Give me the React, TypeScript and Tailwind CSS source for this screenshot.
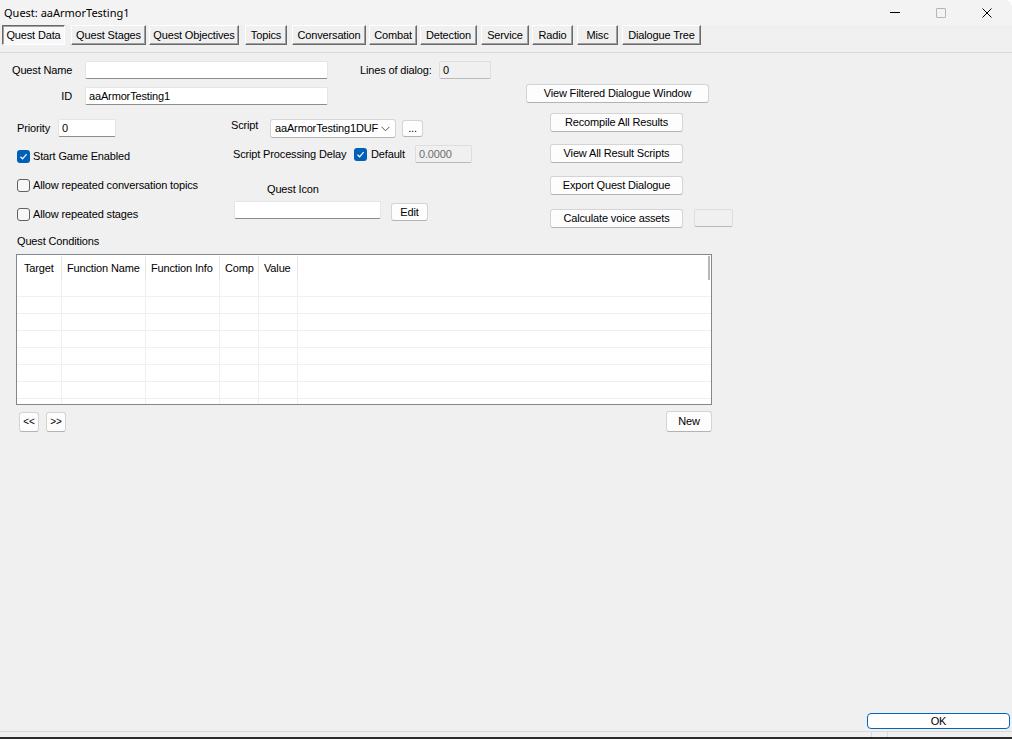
import React from 'react';

const tabs = [
  { label: 'Quest Data', cls: 'w-[63px] ml-[2px]', active: true },
  { label: 'Quest Stages', cls: 'w-[75px] ml-[6px]' },
  { label: 'Quest Objectives', cls: 'w-[90px] ml-[3px]' },
  { label: 'Topics', cls: 'w-[42px] ml-[6px]' },
  { label: 'Conversation', cls: 'w-[74px] ml-[5px]' },
  { label: 'Combat', cls: 'w-[48px] ml-[3px]' },
  { label: 'Detection', cls: 'w-[57px] ml-[3px]' },
  { label: 'Service', cls: 'w-[48px] ml-[4px]' },
  { label: 'Radio', cls: 'w-[41px] ml-[3px]' },
  { label: 'Misc', cls: 'w-[41px] ml-[4px]' },
  { label: 'Dialogue Tree', cls: 'w-[79px] ml-[4px]' },
];

const columns = [
  { label: 'Target', cls: 'w-[45px] pl-[7px]' },
  { label: 'Function Name', cls: 'w-[84px] pl-[5px]' },
  { label: 'Function Info', cls: 'w-[74px] pl-[5px]' },
  { label: 'Comp', cls: 'w-[39px] pl-[5px]' },
  { label: 'Value', cls: 'w-[39px] pl-[5px]' },
];

function Input({ value = '', cls = '' }: { value?: string; cls?: string }) {
  return (
    <div className={`h-[18px] bg-white border border-[#e5e5e5] border-b-[#8d8d8d] rounded-[2px] flex items-center px-[3px] ${cls}`}>
      {value}
    </div>
  );
}

function ReadOnly({ value = '', cls = '' }: { value?: string; cls?: string }) {
  return (
    <div className={`h-[18px] bg-[#f0f0f0] border border-[#dedede] border-b-[#b9b9b9] rounded-[2px] flex items-center px-[3px] ${cls}`}>
      {value}
    </div>
  );
}

function Button({ children, cls = '' }: { children: React.ReactNode; cls?: string }) {
  return (
    <div className={`bg-[#fdfdfd] border border-[#d4d4d4] border-b-[#b3b3b3] rounded-[3px] flex items-center justify-center text-black ${cls}`}>
      {children}
    </div>
  );
}

function Check({ checked, label }: { checked?: boolean; label?: string }) {
  return (
    <div className="flex items-center h-[13px]">
      {checked ? (
        <div className="w-[13px] h-[13px] rounded-[3px] bg-[#005fb8] flex items-center justify-center">
          <svg width="9" height="9" viewBox="0 0 9 9">
            <path d="M1.5 4.8 L3.6 6.8 L7.6 2.2" fill="none" stroke="white" strokeWidth="1.2" />
          </svg>
        </div>
      ) : (
        <div className="w-[13px] h-[13px] rounded-[3px] border border-[#616161] bg-[#f7f7f7]" />
      )}
      {label && <span className="ml-[3px]">{label}</span>}
    </div>
  );
}

export default function App() {
  return (
    <div className="w-[1012px] h-[739px] bg-white overflow-hidden">
      <div
        className="w-[1012px] h-[739px] bg-[#f0f0f0] rounded-tr-[8px] flex flex-col text-[11px] tracking-[-0.15px] text-black leading-none"
        style={{ fontFamily: '"Liberation Sans", Arial, sans-serif' }}
      >
        {/* title bar */}
        <div className="h-[25px] bg-[#f3f3f3] rounded-tr-[8px] flex items-center shrink-0">
          <span className="pl-[4px] text-[11px] tracking-normal" style={{ fontFamily: '"Noto Sans", "Open Sans", sans-serif' }}>
            Quest: aaArmorTesting1
          </span>
          <div className="ml-auto flex items-center h-full">
            <div className="w-[46px] h-full flex items-center justify-center">
              <div className="w-[10px] h-px bg-black" />
            </div>
            <div className="w-[46px] h-full flex items-center justify-center">
              <div className="w-[10px] h-[10px] border border-[#b4b4b4] rounded-[1px]" />
            </div>
            <div className="w-[46px] h-full flex items-center justify-center mr-[2px]">
              <svg width="10" height="10" viewBox="0 0 10 10">
                <path d="M0.5 0.5 L9.5 9.5 M9.5 0.5 L0.5 9.5" stroke="black" strokeWidth="1" />
              </svg>
            </div>
          </div>
        </div>

        {/* tab strip */}
        <div className="h-[28px] border-b border-[#d9d9d9] shrink-0 flex items-start">
          {tabs.map((t) => (
            <div
              key={t.label}
              className={`h-[20px] flex items-center justify-center ${t.cls} ${
                t.active
                  ? 'bg-[#f8f8f8] border border-t-[#696969] border-l-[#696969] border-r-white border-b-white shadow-[inset_1px_1px_0_#a0a0a0]'
                  : 'bg-[#f0f0f0] border border-t-white border-l-white border-r-[#696969] border-b-[#696969] shadow-[inset_-1px_-1px_0_#a0a0a0]'
              }`}
            >
              {t.label}
            </div>
          ))}
        </div>

        {/* upper form */}
        <div className="h-[176px] flex shrink-0">
          <div className="w-[510px] flex flex-col">
            <div className="mt-[8px] h-[18px] flex items-center">
              <span className="ml-[12px] w-[73px]">Quest Name</span>
              <Input cls="w-[243px]" />
              <span className="ml-[32px] w-[79px]">Lines of dialog:</span>
              <ReadOnly cls="w-[52px]" value="0" />
            </div>
            <div className="mt-[8px] h-[18px] flex items-center">
              <span className="w-[85px] text-right pr-[13px]">ID</span>
              <Input cls="w-[243px]" value="aaArmorTesting1" />
            </div>

            <div className="mt-[14px] flex">
              <div className="w-[231px] pl-[17px] flex flex-col">
                <div className="h-[18px] flex items-center">
                  <span className="w-[41px]">Priority</span>
                  <Input cls="w-[58px]" value="0" />
                </div>
                <div className="mt-[13px]">
                  <Check checked label="Start Game Enabled" />
                </div>
                <div className="mt-[16px]">
                  <Check label="Allow repeated conversation topics" />
                </div>
                <div className="mt-[16px]">
                  <Check label="Allow repeated stages" />
                </div>
              </div>

              <div className="flex flex-col">
                <div className="h-[19px] flex items-start">
                  <span className="w-[39px] mt-[1px]">Script</span>
                  <div className="w-[126px] h-[19px] bg-white border border-[#d4d4d4] border-b-[#b3b3b3] rounded-[3px] flex items-center pl-[4px] pr-[5px]">
                    <span className="flex-1">aaArmorTesting1DUF</span>
                    <svg width="9" height="6" viewBox="0 0 9 6">
                      <path d="M0.5 0.8 L4.5 4.8 L8.5 0.8" fill="none" stroke="#555" strokeWidth="1" />
                    </svg>
                  </div>
                  <Button cls="ml-[6px] mt-[1px] w-[21px] h-[17px]">...</Button>
                </div>
                <div className="mt-[7px] h-[18px] flex items-center">
                  <span className="w-[123px] pl-[2px]">Script Processing Delay</span>
                  <Check checked />
                  <span className="ml-[4px] w-[44px]">Default</span>
                  <ReadOnly cls="w-[57px] text-[#6d6d6d]" value="0.0000" />
                </div>
                <div className="mt-[19px] h-[14px] flex items-center ml-[36px]">Quest Icon</div>
                <div className="mt-[5px] flex items-start">
                  <Input cls="ml-[3px] w-[147px]" />
                  <Button cls="ml-[10px] mt-[2px] w-[37px] h-[18px]">Edit</Button>
                </div>
              </div>
            </div>
          </div>

          <div className="ml-[16px] flex flex-col items-start">
            <Button cls="mt-[31px] w-[183px] h-[19px]">View Filtered Dialogue Window</Button>
            <Button cls="mt-[10px] ml-[24px] w-[133px] h-[19px]">Recompile All Results</Button>
            <Button cls="mt-[12px] ml-[24px] w-[133px] h-[19px]">View All Result Scripts</Button>
            <Button cls="mt-[13px] ml-[24px] w-[133px] h-[19px]">Export Quest Dialogue</Button>
            <div className="mt-[14px] ml-[24px] flex items-start">
              <Button cls="w-[133px] h-[19px]">Calculate voice assets</Button>
              <ReadOnly cls="ml-[11px] w-[39px]" />
            </div>
          </div>
        </div>

        {/* conditions list */}
        <div className="mt-[6px] ml-[17px] h-[13px] flex items-center shrink-0">Quest Conditions</div>
        <div className="mt-[6px] ml-[16px] w-[696px] h-[151px] border border-[#828790] bg-white overflow-hidden shrink-0">
          <div className="h-[25px] flex">
            {columns.map((c) => (
              <div key={c.label} className={`h-[24px] mt-px border-r border-[#e5e5e5] flex items-center ${c.cls}`}>
                {c.label}
              </div>
            ))}
            <div className="flex-1 flex justify-end">
              <div className="w-[2px] h-[24px] mt-px mr-px bg-[#b8b8b8]" />
            </div>
          </div>
          {Array.from({ length: 8 }).map((_, r) => (
            <div key={r} className="h-[17px] flex border-b border-[#f0f0f0]">
              {columns.map((c) => (
                <div key={c.label} className={`h-full border-r border-[#f0f0f0] ${c.cls}`} />
              ))}
              <div className="flex-1" />
            </div>
          ))}
        </div>

        <div className="mt-[6px] w-[712px] flex items-start shrink-0">
          <Button cls="ml-[19px] mt-[1px] w-[20px] h-[20px] text-[10px]">&lt;&lt;</Button>
          <Button cls="ml-[7px] mt-[1px] w-[20px] h-[20px] text-[10px]">&gt;&gt;</Button>
          <Button cls="ml-auto w-[46px] h-[21px]">New</Button>
        </div>

        <div className="flex-1" />

        <div className="flex justify-end shrink-0">
          <div className="mr-[2px] w-[143px] h-[16px] bg-white border border-[#0067c0] rounded-[4px] flex items-center justify-center">
            OK
          </div>
        </div>

        {/* status strip */}
        <div className="mt-[2px] h-[6px] border-t border-[#d9d9d9] flex shrink-0">
          <div className="w-[872px] border-r border-[#d9d9d9]" />
          <div className="w-[16px] border-r border-[#d9d9d9]" />
        </div>
        <div className="h-[2px] bg-[#2b2b2b] shrink-0" />
      </div>
    </div>
  );
}
